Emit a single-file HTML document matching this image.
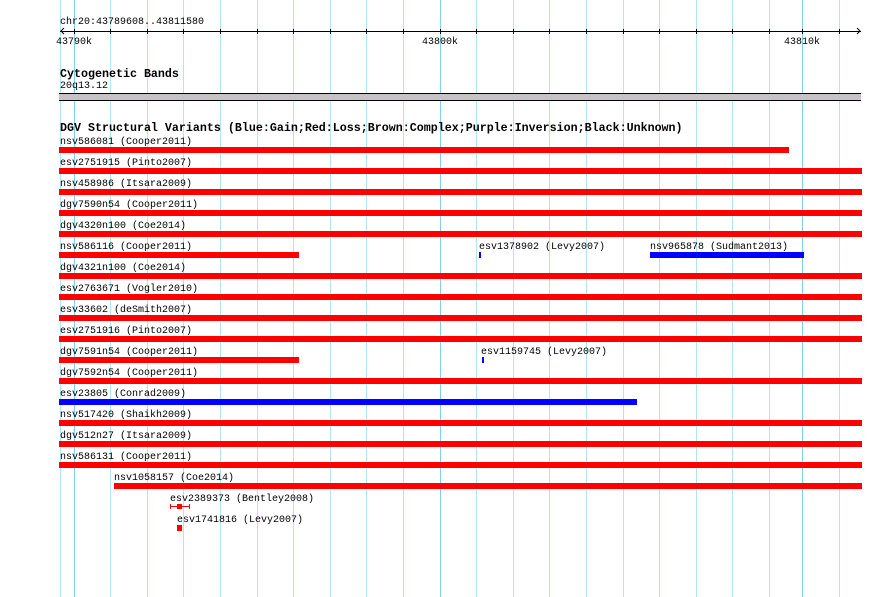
<!DOCTYPE html>
<html><head><meta charset="utf-8"><style>
body{margin:0;width:890px;height:597px;background:#fff;position:relative;overflow:hidden;font-family:"Liberation Mono",monospace;}
div{position:absolute;}
.g{top:0;height:597px;width:1px;background:#aee8ee;}
.G{top:0;height:597px;width:1px;background:#7fd0ea;}
.t{font-size:10px;line-height:12px;white-space:pre;color:#000;margin-top:3px;}
.b{font-size:11.67px;line-height:13px;font-weight:bold;white-space:pre;color:#000;margin-top:2px;}
.r{height:6px;background:#ff0000;}
.u{height:6px;background:#0000ff;}
.k{width:1px;height:5px;top:29px;background:#000;}
</style></head><body>
<div class="g" style="left:60px"></div>
<div class="G" style="left:74px"></div><div class="g" style="left:110px"></div><div class="g" style="left:147px"></div><div class="g" style="left:183px"></div><div class="g" style="left:220px"></div><div class="g" style="left:257px"></div><div class="g" style="left:293px"></div><div class="g" style="left:330px"></div><div class="g" style="left:366px"></div><div class="g" style="left:403px"></div><div class="G" style="left:440px"></div><div class="g" style="left:476px"></div><div class="g" style="left:513px"></div><div class="g" style="left:549px"></div><div class="g" style="left:586px"></div><div class="g" style="left:623px"></div><div class="g" style="left:659px"></div><div class="g" style="left:696px"></div><div class="g" style="left:732px"></div><div class="g" style="left:769px"></div><div class="G" style="left:802px"></div><div class="g" style="left:839px"></div>

<div class="t" style="left:60px;top:14px">chr20:43789608..43811580</div>
<div style="left:60px;top:31px;width:801px;height:1px;background:#000"></div>
<svg style="position:absolute;left:0;top:0" width="890" height="40"><path d="M64 28 L61 31 L64 34 M857 28 L860 31 L857 34" stroke="#000" fill="none" stroke-width="1"/></svg>
<div class="k" style="left:74px"></div><div class="k" style="left:110px"></div><div class="k" style="left:147px"></div><div class="k" style="left:183px"></div><div class="k" style="left:220px"></div><div class="k" style="left:257px"></div><div class="k" style="left:293px"></div><div class="k" style="left:330px"></div><div class="k" style="left:366px"></div><div class="k" style="left:403px"></div><div class="k" style="left:440px"></div><div class="k" style="left:476px"></div><div class="k" style="left:513px"></div><div class="k" style="left:549px"></div><div class="k" style="left:586px"></div><div class="k" style="left:623px"></div><div class="k" style="left:659px"></div><div class="k" style="left:696px"></div><div class="k" style="left:732px"></div><div class="k" style="left:769px"></div><div class="k" style="left:802px"></div><div class="k" style="left:839px"></div>
<div class="t" style="left:56px;top:34px">43790k</div>
<div class="t" style="left:422px;top:34px">43800k</div>
<div class="t" style="left:784px;top:34px">43810k</div>

<div class="b" style="left:60px;top:66px">Cytogenetic Bands</div>
<div class="t" style="left:60px;top:78px">20q13.12</div>
<div style="left:59px;top:93px;width:802px;height:6px;background:#c6c3c6;border-top:1px solid #000;border-bottom:1px solid #000"></div>

<div class="b" style="left:60px;top:120px">DGV Structural Variants (Blue:Gain;Red:Loss;Brown:Complex;Purple:Inversion;Black:Unknown)</div>

<div class="t" style="left:60px;top:134px">nsv586081 (Cooper2011)</div><div class="r" style="left:59px;top:147px;width:730px"></div>
<div class="t" style="left:60px;top:155px">esv2751915 (Pinto2007)</div><div class="r" style="left:59px;top:168px;width:803px"></div>
<div class="t" style="left:60px;top:176px">nsv458986 (Itsara2009)</div><div class="r" style="left:59px;top:189px;width:803px"></div>
<div class="t" style="left:60px;top:197px">dgv7590n54 (Cooper2011)</div><div class="r" style="left:59px;top:210px;width:803px"></div>
<div class="t" style="left:60px;top:218px">dgv4320n100 (Coe2014)</div><div class="r" style="left:59px;top:231px;width:803px"></div>
<div class="t" style="left:60px;top:239px">nsv586116 (Cooper2011)</div><div class="r" style="left:59px;top:252px;width:240px"></div>
<div class="t" style="left:479px;top:239px">esv1378902 (Levy2007)</div><div class="u" style="left:479px;top:252px;width:2px"></div>
<div class="t" style="left:650px;top:239px">nsv965878 (Sudmant2013)</div><div class="u" style="left:650px;top:252px;width:154px"></div>
<div class="t" style="left:60px;top:260px">dgv4321n100 (Coe2014)</div><div class="r" style="left:59px;top:273px;width:803px"></div>
<div class="t" style="left:60px;top:281px">esv2763671 (Vogler2010)</div><div class="r" style="left:59px;top:294px;width:803px"></div>
<div class="t" style="left:60px;top:302px">esv33602 (deSmith2007)</div><div class="r" style="left:59px;top:315px;width:803px"></div>
<div class="t" style="left:60px;top:323px">esv2751916 (Pinto2007)</div><div class="r" style="left:59px;top:336px;width:803px"></div>
<div class="t" style="left:60px;top:344px">dgv7591n54 (Cooper2011)</div><div class="r" style="left:59px;top:357px;width:240px"></div>
<div class="t" style="left:481px;top:344px">esv1159745 (Levy2007)</div><div class="u" style="left:482px;top:357px;width:2px"></div>
<div class="t" style="left:60px;top:365px">dgv7592n54 (Cooper2011)</div><div class="r" style="left:59px;top:378px;width:803px"></div>
<div class="t" style="left:60px;top:386px">esv23805 (Conrad2009)</div><div class="u" style="left:59px;top:399px;width:578px"></div>
<div class="t" style="left:60px;top:407px">nsv517420 (Shaikh2009)</div><div class="r" style="left:59px;top:420px;width:803px"></div>
<div class="t" style="left:60px;top:428px">dgv512n27 (Itsara2009)</div><div class="r" style="left:59px;top:441px;width:803px"></div>
<div class="t" style="left:60px;top:449px">nsv586131 (Cooper2011)</div><div class="r" style="left:59px;top:462px;width:803px"></div>
<div class="t" style="left:114px;top:470px">nsv1058157 (Coe2014)</div><div class="r" style="left:114px;top:483px;width:748px"></div>
<div class="t" style="left:170px;top:491px">esv2389373 (Bentley2008)</div>
<div style="left:170px;top:506px;width:20px;height:1px;background:#f00"></div>
<div style="left:170px;top:504px;width:1px;height:5px;background:#f00"></div>
<div style="left:189px;top:504px;width:1px;height:5px;background:#f00"></div>
<div style="left:177px;top:504px;width:5px;height:5px;background:#f00"></div>
<div class="t" style="left:177px;top:512px">esv1741816 (Levy2007)</div>
<div style="left:177px;top:525px;width:5px;height:6px;background:#f00"></div>
</body></html>
